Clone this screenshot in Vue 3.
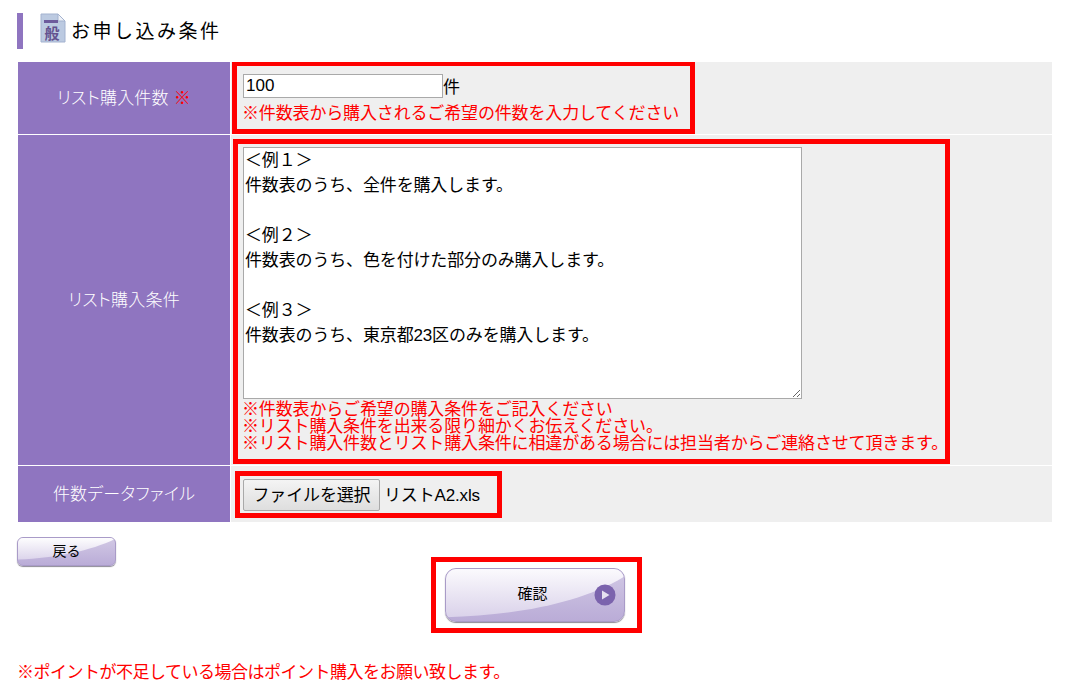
<template>
    <div class="page">
        <h2 class="title">
            <svg class="title-icon" width="26" height="30" viewBox="0 0 26 30">
                <path d="M1 1H18L25 8V29H1Z" fill="#bccae1" stroke="#a3b2cf" />
                <path d="M18 1L25 8H18Z" fill="#eef1f7" stroke="#a3b2cf" />
                <rect x="4" y="7" width="14" height="3" fill="#6d5b9c" />
                <text x="12" y="26" class="title-icon-text">般</text>
            </svg>
            <span>お申し込み条件</span>
        </h2>

        <table class="form-table">
            <tbody>
                <tr class="row-count">
                    <th>リスト購入件数 <span class="red">※</span></th>
                    <td>
                        <div class="marked marked-count">
                            <div class="count-line">
                                <input v-model="count" class="count-input" type="text" /><span class="count-unit">件</span>
                            </div>
                            <p class="red note-single">※件数表から購入されるご希望の件数を入力してください</p>
                        </div>
                    </td>
                </tr>
                <tr class="row-cond">
                    <th>リスト購入条件</th>
                    <td>
                        <div class="marked marked-cond">
                            <textarea v-model="condition" class="cond-input"></textarea>
                            <p v-for="note in notes" :key="note" class="red note-line">{{ note }}</p>
                        </div>
                    </td>
                </tr>
                <tr class="row-file">
                    <th>件数データファイル</th>
                    <td>
                        <div class="marked marked-file">
                            <button class="file-button" type="button">ファイルを選択</button>
                            <span class="file-name">リストA2.xls</span>
                        </div>
                    </td>
                </tr>
            </tbody>
        </table>

        <button class="gloss back-button" type="button">
            <svg class="gloss-sweep" viewBox="0 0 100 30" preserveAspectRatio="none">
                <defs>
                    <linearGradient id="sweepBack" x1="0" y1="0" x2="0" y2="1">
                        <stop offset="0" stop-color="#fdfdfe" />
                        <stop offset="1" stop-color="#dcd4eb" />
                    </linearGradient>
                </defs>
                <path d="M0 24C40 22 75 14 100 1V0H0Z" fill="url(#sweepBack)" />
            </svg>
            <span>戻る</span>
        </button>

        <div class="confirm-wrap">
            <div class="marked-confirm">
                <button class="gloss confirm-button" type="button">
                    <svg class="gloss-sweep" viewBox="0 0 180 54" preserveAspectRatio="none">
                        <defs>
                            <linearGradient id="sweepConfirm" x1="0" y1="0" x2="0" y2="1">
                                <stop offset="0" stop-color="#fbfafd" />
                                <stop offset="1" stop-color="#dad2ea" />
                            </linearGradient>
                        </defs>
                        <path d="M0 50C70 48 135 36 180 8V0H0Z" fill="url(#sweepConfirm)" />
                    </svg>
                    <span>確認</span>
                    <svg class="play-icon" width="22" height="22" viewBox="0 0 22 22">
                        <circle cx="11" cy="11" r="10.5" fill="#7b63ad" />
                        <path d="M8 6.5L15.5 11L8 15.5Z" fill="#e6e0f0" />
                    </svg>
                </button>
            </div>
        </div>

        <p class="red footer-note">※ポイントが不足している場合はポイント購入をお願い致します。</p>
    </div>
</template>

<script setup>
import { ref } from 'vue';

const count = ref('100');

const condition = ref(`＜例１＞
件数表のうち、全件を購入します。

＜例２＞
件数表のうち、色を付けた部分のみ購入します。

＜例３＞
件数表のうち、東京都23区のみを購入します。`);

const notes = [
    '※件数表からご希望の購入条件をご記入ください',
    '※リスト購入条件を出来る限り細かくお伝えください。',
    '※リスト購入件数とリスト購入条件に相違がある場合には担当者からご連絡させて頂きます。'
];
</script>

<style>
body {
    background: #fff;
}
</style>

<style scoped>
.page {
    width: 1072px;
    height: 700px;
    overflow: hidden;
    box-sizing: border-box;
    padding: 13px 20px 0 17px;
    font-family: "Liberation Sans", "Noto Sans CJK JP", sans-serif;
    font-size: 17px;
    letter-spacing: -0.15px;
    color: #000;
}

p {
    margin: 0;
}

.red {
    color: #f00;
}

.title {
    display: flex;
    align-items: flex-start;
    height: 36px;
    margin: 0 0 12px;
    padding-left: 17px;
    border-left: 6px solid #8f75c0;
    font-size: 19px;
    font-weight: normal;
    letter-spacing: 2.5px;
    color: #000;
}

.title span {
    margin: 5px 0 0 5px;
    line-height: 28px;
}

.title-icon-text {
    font-size: 15px;
    font-weight: bold;
    letter-spacing: 0;
    text-anchor: middle;
    fill: #64528f;
}

.form-table {
    width: 1034px;
    margin-left: 1px;
    border-collapse: collapse;
    table-layout: fixed;
}

.form-table th {
    width: 212px;
    padding: 0 0 3px;
    background: #8f75c0;
    border: 1px solid #fff;
    border-width: 1px 1px 1px 0;
    color: #fff;
    font-weight: 300;
    font-feature-settings: "palt";
    letter-spacing: 0.2px;
    text-align: center;
}

.form-table td {
    padding: 0;
    background: #efefef;
    border-top: 1px solid #fff;
    border-bottom: 1px solid #fff;
    vertical-align: top;
}

.row-count {
    height: 73px;
}

.row-cond {
    height: 331px;
}

.row-file {
    height: 57px;
}

.marked {
    display: block;
    box-sizing: border-box;
    border: 5px solid #f00;
}

.marked-count {
    width: 463px;
    height: 73px;
    margin: -1px 0 0 1px;
    padding: 8px 0 0 6px;
}

.count-line {
    display: flex;
    align-items: center;
    height: 24px;
}

.count-input {
    box-sizing: border-box;
    width: 200px;
    height: 24px;
    padding: 1px 2px;
    border: 1px solid #a9a9a9;
    background: #fff;
    font: inherit;
    color: #000;
}

.count-unit {
    margin-bottom: 2px;
}

.note-single {
    margin: 4px 0 0 -1px;
    line-height: 24px;
}

.marked-cond {
    width: 717px;
    height: 325px;
    margin: 4px 0 0 2px;
    padding: 3px 0 0 5px;
}

.cond-input {
    display: block;
    box-sizing: border-box;
    width: 559px;
    height: 252px;
    margin-bottom: 2px;
    padding: 0 1px;
    border: 1px solid #a9a9a9;
    background: #fff;
    font: inherit;
    line-height: 25px;
    letter-spacing: inherit;
    color: #000;
}

.note-line {
    margin-left: -1px;
    line-height: 17px;
    white-space: nowrap;
}

.marked-file {
    display: flex;
    align-items: center;
    width: 267px;
    height: 47px;
    margin: 5px 0 0 4px;
    padding-left: 3px;
}

.file-button {
    box-sizing: border-box;
    width: 137px;
    height: 32px;
    padding: 0 0 3px;
    border: 1px solid #a9a9a9;
    border-radius: 2px;
    background: linear-gradient(#f4f4f4, #dedede);
    font: inherit;
    letter-spacing: inherit;
    color: #000;
}

.file-name {
    margin: 0 0 3px 4px;
}

.gloss {
    position: relative;
    display: flex;
    align-items: center;
    justify-content: center;
    box-sizing: border-box;
    padding: 0;
    border: 1px solid #a99bc8;
    background: linear-gradient(#d2c9e5, #baacd7);
    box-shadow: 0 1px 1px #8d8a96;
    font: inherit;
    letter-spacing: 0;
    color: #000;
    overflow: hidden;
}

.gloss span {
    position: relative;
}

.gloss-sweep {
    position: absolute;
    top: 0;
    left: 0;
    width: 100%;
    height: 100%;
}

.back-button {
    width: 99px;
    height: 29px;
    margin-top: 14px;
    padding-bottom: 3px;
    border-radius: 6px;
    font-size: 14px;
}

.confirm-wrap {
    display: flex;
    justify-content: center;
    width: 1038px;
}

.marked-confirm {
    box-sizing: border-box;
    width: 211px;
    height: 76px;
    margin-top: -9px;
    padding: 6px 9px;
    border: 5px solid #f00;
}

.confirm-button {
    width: 180px;
    height: 54px;
    padding: 0 4px 5px 0;
    border-radius: 11px;
    font-size: 15px;
}

.play-icon {
    position: absolute;
    top: 15px;
    right: 8px;
}

.footer-note {
    margin-top: 30px;
    line-height: 20px;
    letter-spacing: -0.5px;
}
</style>
